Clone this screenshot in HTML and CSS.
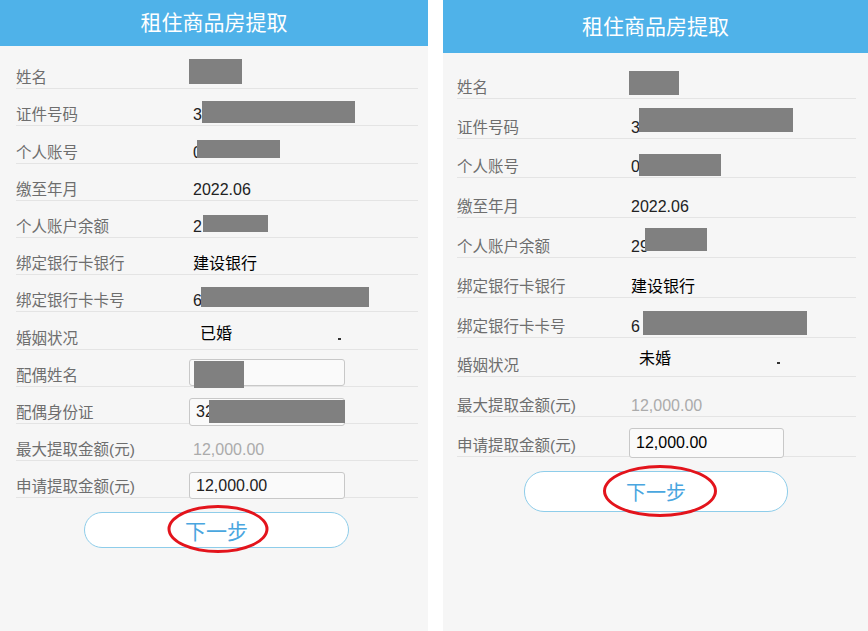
FILE: index.html
```html
<!DOCTYPE html>
<html lang="zh-CN">
<head>
    <meta charset="UTF-8">
    <meta name="viewport" content="width=device-width, initial-scale=1.0">
    <title>租住商品房提取</title>
    <link rel="stylesheet" href="styles.css">
</head>
<body>

<div class="screens">

    <!-- Married applicant -->
    <section class="screen screen-a">
        <header class="bar">租住商品房提取</header>
        <div class="form">
            <div class="row"><span class="label">姓名</span><span class="value"><span class="mask a-name"></span></span></div>
            <div class="row"><span class="label">证件号码</span><span class="value"><span class="txt">3</span><span class="mask a-id"></span></span></div>
            <div class="row"><span class="label">个人账号</span><span class="value"><span class="txt">0</span><span class="mask a-acct"></span></span></div>
            <div class="row"><span class="label">缴至年月</span><span class="value"><span class="txt">2022.06</span></span></div>
            <div class="row"><span class="label">个人账户余额</span><span class="value"><span class="txt">2</span><span class="mask a-bal"></span></span></div>
            <div class="row"><span class="label">绑定银行卡银行</span><span class="value"><span class="txt strong">建设银行</span></span></div>
            <div class="row"><span class="label">绑定银行卡卡号</span><span class="value"><span class="txt">6</span><span class="mask a-card"></span></span></div>
            <div class="row"><span class="label">婚姻状况</span>
                <span class="select"><span class="txt strong">已婚</span><span class="caret"></span></span>
            </div>
            <div class="row"><span class="label">配偶姓名</span>
                <span class="field field-name"><span class="mask a-sname"></span></span>
            </div>
            <div class="row"><span class="label">配偶身份证</span>
                <span class="field field-sid"><span class="txt">32</span><span class="mask a-sid"></span></span>
            </div>
            <div class="row"><span class="label">最大提取金额(元)</span><span class="value"><span class="txt muted">12,000.00</span></span></div>
            <div class="row"><span class="label">申请提取金额(元)</span>
                <span class="field field-amount"><span class="txt">12,000.00</span></span>
            </div>
        </div>
        <button class="next">下一步</button>
    </section>

    <!-- Single applicant -->
    <section class="screen screen-b">
        <header class="bar">租住商品房提取</header>
        <div class="form">
            <div class="row"><span class="label">姓名</span><span class="value"><span class="mask b-name"></span></span></div>
            <div class="row"><span class="label">证件号码</span><span class="value"><span class="txt">3</span><span class="mask b-id"></span></span></div>
            <div class="row"><span class="label">个人账号</span><span class="value"><span class="txt">0</span><span class="mask b-acct"></span></span></div>
            <div class="row"><span class="label">缴至年月</span><span class="value"><span class="txt">2022.06</span></span></div>
            <div class="row"><span class="label">个人账户余额</span><span class="value"><span class="txt">29</span><span class="mask b-bal"></span></span></div>
            <div class="row"><span class="label">绑定银行卡银行</span><span class="value"><span class="txt strong">建设银行</span></span></div>
            <div class="row"><span class="label">绑定银行卡卡号</span><span class="value"><span class="txt">6</span><span class="mask b-card"></span></span></div>
            <div class="row"><span class="label">婚姻状况</span>
                <span class="select"><span class="txt strong">未婚</span><span class="caret"></span></span>
            </div>
            <div class="row"><span class="label">最大提取金额(元)</span><span class="value"><span class="txt muted">12,000.00</span></span></div>
            <div class="row"><span class="label">申请提取金额(元)</span>
                <span class="field field-amount"><span class="txt strong">12,000.00</span></span>
            </div>
        </div>
        <button class="next">下一步</button>
    </section>

</div>

</body>
</html>
```

FILE: styles.css
```css
* {
    box-sizing: border-box;
}

body {
    margin: 0;
    background: #fff;
    font-family: "Liberation Sans", "Noto Sans CJK SC", sans-serif;
}

.screens {
    display: flex;
    gap: 15px;
    height: 631px;
}

.screen {
    background: #f6f6f6;
    display: flex;
    flex-direction: column;
}

.screen-a { width: 428px; }
.screen-b { width: 425px; }

.bar {
    background: #4fb2e9;
    color: #fff;
    text-align: center;
    font-size: 21px;
}

.screen-a .bar { height: 46px; line-height: 46px; }
.screen-b .bar { height: 53px; line-height: 53px; }

.screen-a .form { padding: 6px 10px 0 16px; }
.screen-b .form { padding: 6px 12px 0 14px; }

.row {
    display: flex;
    align-items: flex-end;
    border-bottom: 1px solid #e4e4e4;
}

.screen-a .row { height: 37.2px; }
.screen-b .row { height: 39.8px; }

.label {
    flex: none;
    width: 177px;
    font-size: 15.5px;
    line-height: 20px;
    color: #6e6e6e;
}

.screen-b .label { width: 174px; }

.value {
    display: flex;
    align-items: flex-end;
}

.txt {
    font-size: 16px;
    line-height: 20px;
    color: #222;
    white-space: nowrap;
}

.strong {
    color: #000;
}

.muted {
    color: #ababab;
}

/* redaction blocks */
.mask {
    display: block;
    flex: none;
    background: #808080;
}

.a-name  { width: 53px;  height: 25px; margin: 0 0 4px -4px; }
.a-id    { width: 153px; height: 22px; margin-bottom: 2px; }
.a-acct  { width: 83px;  height: 18px; margin: 0 0 5px -5px; }
.a-bal   { width: 65px;  height: 17px; margin: 0 0 5px 1px; }
.a-card  { width: 168px; height: 20px; margin: 0 0 4px -1px; }
.a-sname { width: 50px;  height: 27px; margin: 1px 0 0 -2px; align-self: flex-start; }
.a-sid   { width: 136px; height: 23px; margin: 1px 0 0 -5px; align-self: flex-start; }

.b-name  { width: 50px;  height: 24px; margin: 0 0 3px -2px; }
.b-id    { width: 154px; height: 24px; margin: 0 0 6px -1px; }
.b-acct  { width: 82px;  height: 22px; margin: 0 0 1px -1px; }
.b-bal   { width: 62px;  height: 23px; margin: 0 0 6px -4px; }
.b-card  { width: 164px; height: 24px; margin: 0 0 2px 3px; }

/* dropdown */
.select {
    display: flex;
    align-items: flex-end;
    width: 141px;
    margin-left: 7px;
}

.select .txt { margin-bottom: 5px; }

.caret {
    width: 3px;
    height: 2px;
    margin: 0 0 9px auto;
    background: #333;
}

.screen-b .select { margin-left: 8px; }
.screen-b .select .txt { margin-bottom: 7px; }
.screen-b .caret { margin-bottom: 12px; }

/* input boxes */
.field {
    display: flex;
    align-items: center;
    width: 156px;
    height: 27px;
    margin-left: -4px;
    padding: 0 6px;
    border: 1px solid #c8c8c8;
    border-radius: 3px;
    background: #fafafa;
}

.field-sid { height: 28px; margin-bottom: -3px; }
.field-amount { margin-bottom: -2px; }

.screen-b .field {
    width: 155px;
    height: 30px;
    margin-left: -2px;
}

/* next button with the red mark drawn round its label */
.next {
    position: relative;
    display: block;
    margin-top: 14px;
    background: #fff;
    border: 1px solid #8ecdea;
    border-radius: 20px;
    color: #4aa6df;
    font-family: inherit;
    font-size: 21px;
    padding: 0;
}

.screen-a .next { width: 265px; height: 36px; margin-left: 84px; }
.screen-b .next { width: 264px; height: 41px; margin-left: 81px; font-size: 20px; }

.next::after {
    content: "";
    position: absolute;
    left: 50%;
    top: 50%;
    border: 3px solid #e3141c;
    border-radius: 50%;
    transform: translate(-50%, -50%);
}

.screen-a .next::after { width: 95px; height: 42px; margin: -1px 0 0 1px; }
.screen-b .next::after { width: 108px; height: 46px; margin-left: 4px; }
```
